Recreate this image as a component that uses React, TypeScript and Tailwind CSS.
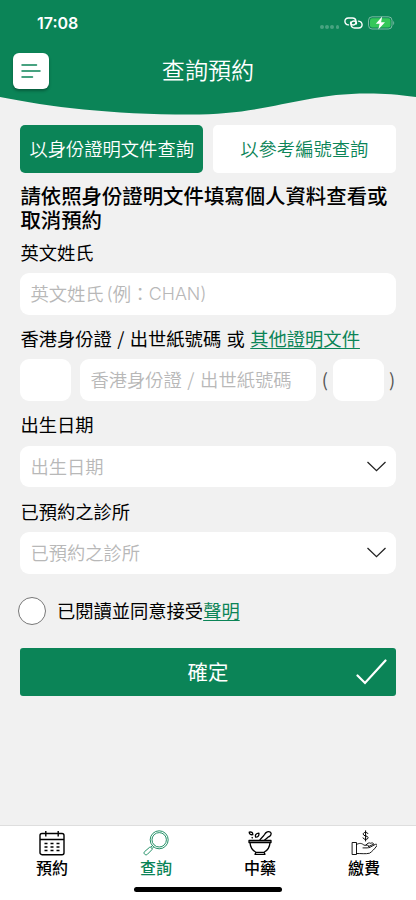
import type { ReactNode } from "react";

function StatusBar() {
  return (
    <div className="flex h-[46px] items-center justify-between pl-[37px] pr-[21px] text-white">
      <span className="font-['Inter','Liberation_Sans',sans-serif] text-[16px] leading-none font-semibold">
        17:08
      </span>
      <div className="flex items-center">
        <div className="mt-[8px] mr-[5px] flex gap-[1.6px]">
          {[0, 1, 2, 3].map((dot) => (
            <span key={dot} className="size-[3.5px] rounded-full bg-white/25" />
          ))}
        </div>
        <svg width="19" height="12" viewBox="0 0 19 12" fill="none" stroke="currentColor" strokeWidth="1.4" strokeLinecap="round" className="mr-[5px]">
          <path d="M4.500 7.900C-.2 7.300 -.3 1 4.400 1H8.400C13 1 13.200 7.900 9.200 8C6.800 8.100 6 6.200 6.900 4.900" />
          <path d="M14.500 4.100c4.700.6 4.800 6.900.1 6.900H10.600C6 11 5.800 4.100 9.800 4c2.400-.1 3.200 1.800 2.300 3.100" />
        </svg>
        <svg width="27" height="14" viewBox="0 0 27 14" fill="none">
          <rect x=".5" y=".8" width="23.500" height="12.200" rx="3.600" stroke="#fff" strokeOpacity=".45" />
          <rect x="2" y="2.300" width="20.500" height="9.200" rx="2.300" fill="#34c759" />
          <path d="M25.300 5v4c1.200-.5 1.200-3.500 0-4Z" fill="#fff" fillOpacity=".5" />
          <path d="M14.200.5 7.800 7.700h3.800L10.300 13.500l6.700-7.300h-3.900L14.200.5Z" fill="#fff" />
        </svg>
      </div>
    </div>
  );
}

function Header() {
  return (
    <header className="relative h-[125px] shrink-0">
      <svg viewBox="0 0 416 125" className="absolute inset-0 h-[125px] w-[416px]">
        <path d="M0 0H416V97C398 94.500 384 93.500 368 93.500C300 93.500 270 114.500 190 114.500C110 114.500 50 107 0 97Z" fill="#0b8457" />
      </svg>
      <div className="relative">
        <StatusBar />
        <div className="grid h-[45px] grid-cols-[48px_1fr_48px] items-center">
          <button className="ml-[12.500px] mt-[5px] flex size-[36px] items-center justify-center rounded-[6px] bg-white shadow-[0_2px_3px_rgba(0,0,0,0.3)]">
            <svg width="20" height="16" viewBox="0 0 20 16" stroke="#0b8457" strokeWidth="1.500" strokeLinecap="round">
              <path d="M1 2H15.500M1 8H19M1 14H11.500" />
            </svg>
          </button>
          <h1 className="text-center text-[23.100px] leading-[30px] font-[350] text-white">
            查詢預約
          </h1>
        </div>
      </div>
    </header>
  );
}

function Label({ children }: { children: ReactNode }) {
  return (
    <div className="mt-[11.500px] mb-[9.100px] h-[24px] text-[18.300px] leading-[24px] [word-spacing:1.300px] whitespace-nowrap text-black">
      {children}
    </div>
  );
}

function SelectBox({ text }: { text: string }) {
  return (
    <button className="flex h-[41.700px] w-full items-center justify-between rounded-[9px] bg-white pr-[10px] pl-[10px] text-[18.300px] font-[350] text-[#b8b8b8]">
      <span>{text}</span>
      <svg width="19" height="11" viewBox="0 0 19 11" fill="none" stroke="#222" strokeWidth="1.300">
        <path d="M.5 1 9.500 9.700 18.500 1" />
      </svg>
    </button>
  );
}

function CalendarIcon() {
  return (
    <svg width="26" height="26" viewBox="0 0 26 26" fill="none" stroke="currentColor" strokeWidth="1.400">
      <rect x="1" y="3.500" width="24" height="21.200" rx="2" />
      <path d="M1 9.500H25M6.800 1V6.500M19.200 1V6.500" />
      <path d="M5.500 13.500H8.500M11.500 13.500H14.500M17.500 13.500H20.500M5.500 17H8.500M11.500 17H14.500M17.500 17H20.500M5.500 20.500H8.500M11.500 20.500H14.500M17.500 20.500H20.500" strokeWidth="1.500" />
    </svg>
  );
}

function SearchIcon() {
  return (
    <svg width="26" height="26" viewBox="0 0 26 26" fill="none" stroke="currentColor" strokeWidth=".9">
      <circle cx="16.200" cy="9.800" r="9" />
      <circle cx="16.200" cy="9.800" r="7.200" />
      <path d="M9.300 15.700 7.800 17.200M10.600 17 9.100 18.500" />
      <path d="M6.600 17.300c.9-.9 3.300 1.300 2.400 2.300l-4.600 4.700c-1.700 1.600-4.500-.8-2.900-2.600Z" />
    </svg>
  );
}

function MortarIcon() {
  return (
    <svg width="26" height="26" viewBox="0 0 26 26" fill="none" stroke="currentColor" strokeWidth="1.300" strokeLinejoin="round">
      <path d="M2 10.500H24V12.600H2Z" fill="currentColor" fillOpacity=".4" />
      <path d="M3 12.600c.3 5 2.800 8 6 9.700h8c3.200-1.700 5.700-4.700 6-9.700M9 22.300 8 24.300H18L17 22.300" />
      <path d="M12.500 10.500C14 8 16 7 17.500 4.500c1.400-2.700 4-3.700 6-2.300 1.700 2-.2 4.300-2.500 5L17.200 10.500" />
      <path d="M8.700 7.200c-1-2.300.5-3.800 3.200-4C12.200 5.500 11 7.200 8.700 7.200ZM2.200 2.200c2.300-.6 3.700.3 3.600 2.500-2.300.3-3.500-.5-3.600-2.500ZM4.700 7.200l1 1" />
    </svg>
  );
}

function PayIcon() {
  return (
    <svg width="26" height="26" viewBox="0 0 26 26" fill="none" stroke="currentColor" strokeWidth=".9" strokeLinejoin="round" strokeLinecap="round">
      <path d="M16.900 3.600c-.4-1.700-4.700-1.800-4.700.5 0 2.400 4.900 1.200 4.900 3.600 0 2.200-4.700 2.300-5.100.2M14.600.8V11" strokeWidth="1" />
      <path d="M1.500 12.500H5.500V24.500H1.500ZM5.500 14.500c3-1.800 5.500-1.300 7.500.7h3.300c2 0 1.900 2.500 0 2.700h-4.300" />
      <path d="M17.500 16.600 22.300 14.300M18 17.800 24.500 14.300c1.300-.4 2 .7 1.200 1.700-2.200 3-4.400 5.300-7.100 7.200-4 1-8.500.2-13.100.3" />
      <path d="M15 15c1.200-1.700 3-2.700 4.800-1.700 1.300-.8 2.500-.5 3 .9" />
    </svg>
  );
}

const tabs = [
  { label: "預約", icon: <CalendarIcon />, active: false },
  { label: "查詢", icon: <SearchIcon />, active: true },
  { label: "中藥", icon: <MortarIcon />, active: false },
  { label: "繳費", icon: <PayIcon />, active: false },
];

export default function App() {
  return (
    <div className="flex h-[900px] w-[416px] flex-col overflow-hidden bg-[#f1f1f1] font-['Noto_Sans_CJK_TC',sans-serif]">
      <Header />

      <main className="flex-1 pr-[20.400px] pl-[20.400px]">
        <div className="grid grid-cols-2 gap-[10px] text-[18.300px] font-[350]">
          <button className="h-[48px] rounded-[5px] bg-[#0b8457] whitespace-nowrap text-white">
            以身份證明文件查詢
          </button>
          <button className="h-[48px] rounded-[5px] bg-white whitespace-nowrap text-[#0b8457]">
            以參考編號查詢
          </button>
        </div>

        <h2 className="mt-[9.500px] -mb-[2.100px] text-[20.400px] leading-[24px] font-medium whitespace-nowrap text-black">
          請依照身份證明文件填寫個人資料查看或
          <br />
          取消預約
        </h2>

        <Label>英文姓氏</Label>
        <div className="flex h-[41.700px] items-center rounded-[9px] bg-white px-[10px] text-[18.300px] font-[350] text-[#b8b8b8]">
          英文姓氏
          <span className="ml-[3px] font-['Inter',sans-serif] text-[17.800px]">(</span>例：
          <span className="-ml-[.5px] font-['Inter',sans-serif] text-[17.800px]">CHAN)</span>
        </div>

        <Label>
          香港身份證 / 出世紙號碼 或{" "}
          <a className="text-[#0b8457] underline decoration-1 underline-offset-2">其他證明文件</a>
        </Label>
        <div className="flex h-[41.700px] items-center text-[18.300px] text-[#555]">
          <div className="h-full w-[50.500px] rounded-[9px] bg-white" />
          <div className="ml-[9.500px] flex h-full w-[236px] items-center rounded-[9px] bg-white pl-[10px] font-[350] [word-spacing:1.500px] whitespace-nowrap text-[#b8b8b8]">
            香港身份證 / 出世紙號碼
          </div>
          <span className="w-[17px] text-center">(</span>
          <div className="h-full w-[50.500px] rounded-[9px] bg-white" />
          <span className="ml-[5px]">)</span>
        </div>

        <Label>出生日期</Label>
        <SelectBox text="出生日期" />

        <Label>已預約之診所</Label>
        <SelectBox text="已預約之診所" />

        <div className="mt-[23.500px] -ml-[2.500px] flex h-[28px] items-center text-[18.300px] text-black">
          <span className="mr-[10.500px] size-[28.500px] rounded-full border border-[#777] bg-white" />
          已閱讀並同意接受
          <a className="text-[#0b8457] underline decoration-1 underline-offset-2">聲明</a>
        </div>

        <button className="mt-[23px] grid h-[48px] w-full grid-cols-[40px_1fr_40px] items-center rounded-[3px] bg-[#0b8457] text-[20.400px] text-white">
          <span className="col-start-2 -mt-[2px]">確定</span>
          <svg width="31" height="26" viewBox="0 0 31 26" fill="none" stroke="currentColor" strokeWidth="2.200" strokeLinecap="round">
            <path d="M1.500 16.500 9 24 29.500 1.500" />
          </svg>
        </button>
      </main>

      <nav className="h-[75px] shrink-0 border-t border-[#dedede] bg-white">
        <div className="grid h-[61px] grid-cols-4 pt-[4px]">
          {tabs.map((tab) => (
            <div
              key={tab.label}
              className={
                tab.active
                  ? "flex flex-col items-center text-[#0b8457]"
                  : "flex flex-col items-center text-black"
              }
            >
              {tab.icon}
              <span className="text-[16px] leading-[22px] font-medium">{tab.label}</span>
            </div>
          ))}
        </div>
        <div className="mx-auto h-[5px] w-[148px] rounded-full bg-black" />
      </nav>
    </div>
  );
}
